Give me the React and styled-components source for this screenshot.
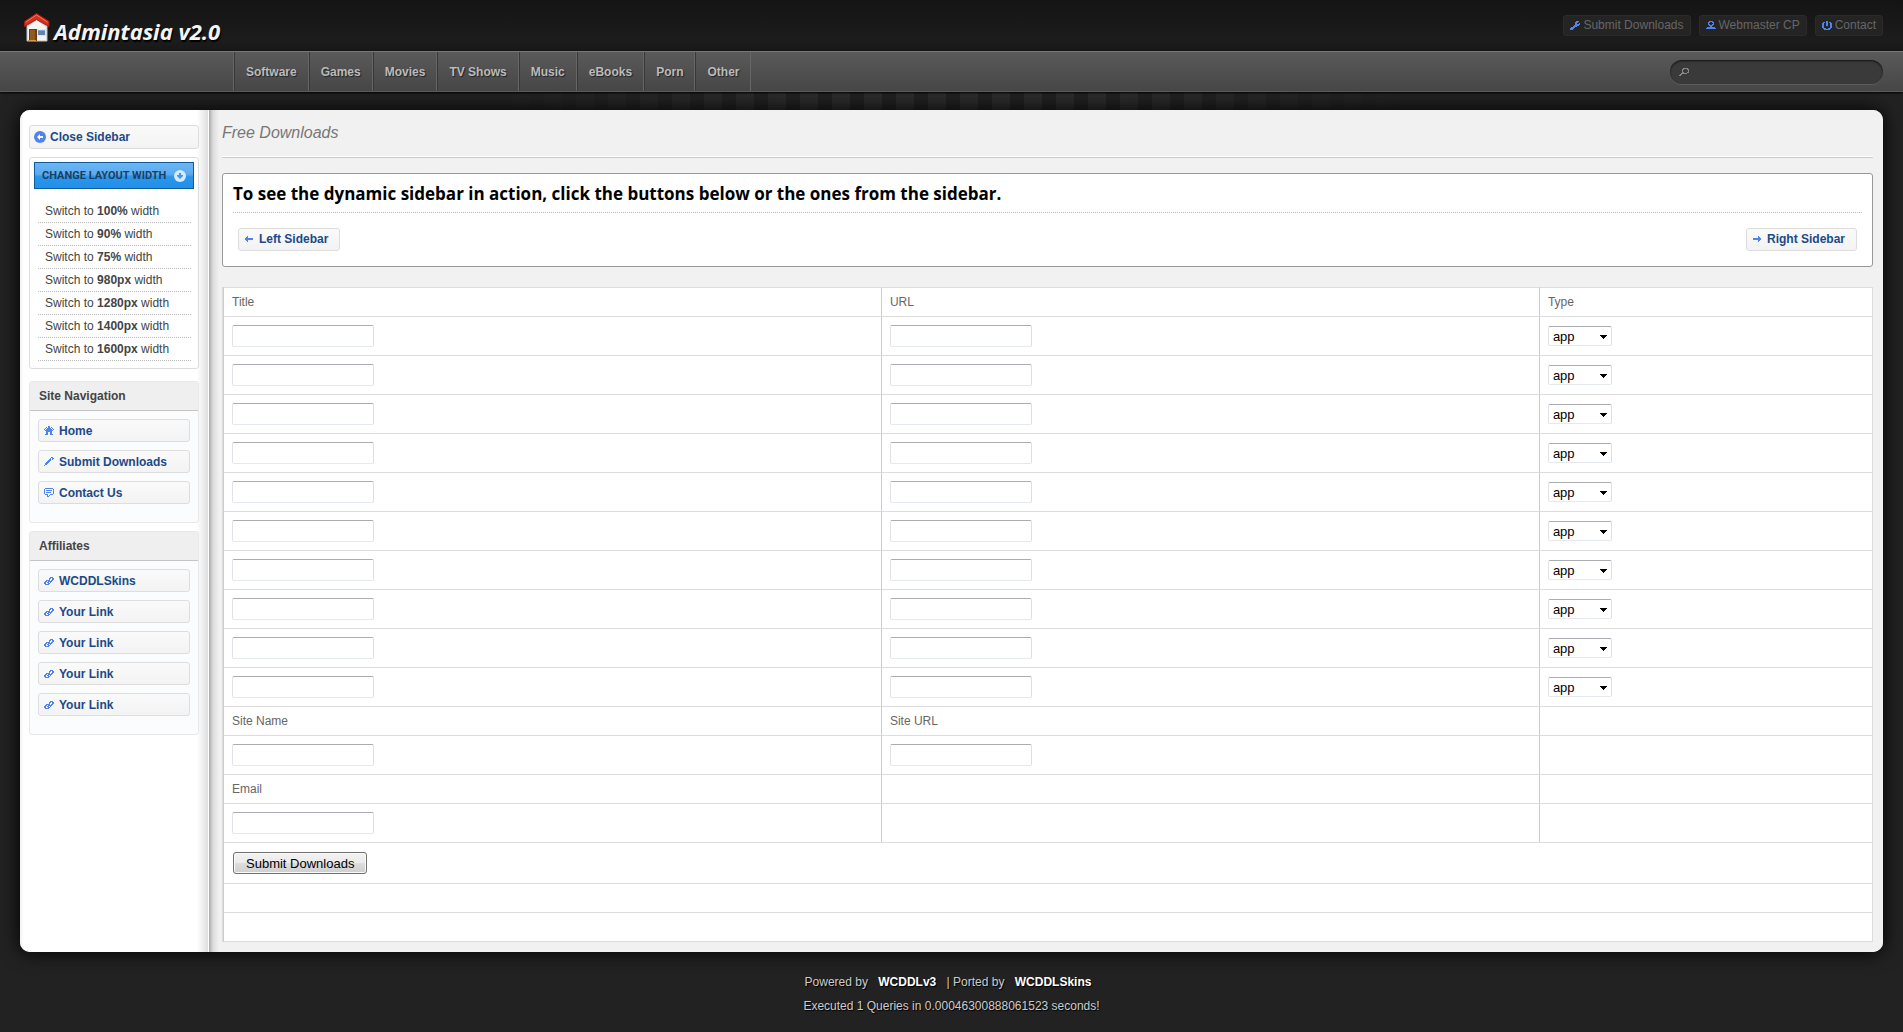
import React, { useState } from 'react';
import styled, { createGlobalStyle, css } from 'styled-components';

const categories = ['Software', 'Games', 'Movies', 'TV Shows', 'Music', 'eBooks', 'Porn', 'Other'];
const widths = ['100%', '90%', '75%', '980px', '1280px', '1400px', '1600px'];
const downloadRows = [1, 2, 3, 4, 5, 6, 7, 8, 9, 10];

// one character per pixel
const glyphs = {
  wrench: [
    '......###.',
    '.....###..',
    '.....##..#',
    '.....#####',
    '....#####.',
    '...####...',
    '.####.....',
    '####......',
    '###.......',
  ],
  person: [
    '...####...',
    '..##..##..',
    '..#....#..',
    '..##..##..',
    '...####...',
    '....##....',
    '.########.',
    '##########',
  ],
  power: [
    '....##....',
    '.##.##.##.',
    '##..##..##',
    '##..##..##',
    '##..##..##',
    '##......##',
    '##......##',
    '.###..###.',
    '..######..',
  ],
  search: [
    '....#####.',
    '...##...##',
    '...#.....#',
    '...#.....#',
    '...##...##',
    '..######..',
    '.##.......',
    '##........',
  ],
  home: [
    '....##....',
    '..#.##.#..',
    '.#.####.#.',
    '#.######.#',
    '.########.',
    '..######..',
    '..##..##..',
    '..##..##..',
    '.###..###.',
  ],
  pencil: [
    '.......##.',
    '......#.##',
    '.....##.#.',
    '....###...',
    '...###....',
    '..###.....',
    '.###......',
    '.##.......',
    '#.........',
  ],
  comment: [
    '.########.',
    '#........#',
    '#.######.#',
    '#........#',
    '#.#####..#',
    '#........#',
    '.###..###.',
    '...#.#....',
    '...##.....',
  ],
  link: [
    '......###.',
    '.....##.##',
    '.....#..##',
    '..####.##.',
    '.##.####..',
    '##.##.#...',
    '##..##....',
    '.####.....',
  ],
  left: [
    '..#.....',
    '.##.....',
    '########',
    '########',
    '.##.....',
    '..#.....',
  ],
  right: [
    '.....#..',
    '.....##.',
    '########',
    '########',
    '.....##.',
    '.....#..',
  ],
};

const Glyph = ({ name }) => {
  const rows = glyphs[name];
  return (
    <GlyphSvg
      width={rows[0].length}
      height={rows.length}
      viewBox={`0 0 ${rows[0].length} ${rows.length}`}
      shapeRendering="crispEdges"
      aria-hidden="true"
    >
      {rows.map((row, y) =>
        [...row].map((c, x) =>
          c === '#' ? <rect key={`${x}-${y}`} x={x} y={y} width="1" height="1" /> : null
        )
      )}
    </GlyphSvg>
  );
};

const HouseLogo = () => (
  <svg width="26" height="29" viewBox="0 0 26 29" aria-hidden="true">
    <path d="M3 10 L13 3 L23 10 V28 H3 Z" fill="#f4f4f4" stroke="#bdbdbd" />
    <path d="M4 14 L12.5 7 L22 14 V10 L13 4 L4 10 Z" fill="#c9c9c9" />
    <path d="M0.5 8.5 L12.5 0.5 L25 8.5 V13.5 L12.5 6.5 L0.5 13.5 Z" fill="#d9301c" stroke="#a81c0e" />
    <path d="M2 9 L12.5 2 L23.5 9" fill="none" stroke="#f0796a" />
    <rect x="5" y="16" width="8" height="12" fill="#6b3f10" />
    <rect x="6" y="17" width="5" height="10" fill="#8f5c1f" />
    <rect x="4" y="27" width="8" height="1" fill="#d89a4a" />
    <rect x="13" y="16" width="9" height="7" fill="#dfe7ef" />
    <rect x="14" y="17" width="7" height="5" fill="#5f87b3" />
    <rect x="14" y="17" width="7" height="1" fill="#87a9cc" />
  </svg>
);

const CircleArrow = ({ down }) => (
  <svg width="12" height="12" viewBox="0 0 12 12" aria-hidden="true">
    <circle cx="6" cy="6" r="6" fill={down ? '#d3eafc' : '#4f83ee'} />
    {down ? (
      <path d="M5 3 H7 V5 H9 V6 L6 9 L3 6 V5 H5 Z" fill="#3f9ae6" />
    ) : (
      <path d="M3 6 L6 3 V5 H9 V7 H6 V9 Z" fill="#fff" />
    )}
  </svg>
);

const TypeSelect = ({ row }) => (
  <SelectWrap>
    <Select defaultValue="app" aria-label={`Type ${row}`}>
      <option value="app">app</option>
      <option value="game">game</option>
      <option value="movie">movie</option>
      <option value="tv">tv</option>
      <option value="music">music</option>
    </Select>
    <SelectArrow width="7" height="4" viewBox="0 0 7 4" shapeRendering="crispEdges" aria-hidden="true">
      <path d="M0 0 H7 V1 H6 V2 H5 V3 H4 V4 H3 V3 H2 V2 H1 V1 H0 Z" />
    </SelectArrow>
  </SelectWrap>
);

const App = () => {
  const [sidebarOpen, setSidebarOpen] = useState(true);

  return (
    <>
      <GlobalStyle />
      <Header>
        <Logo href="#">
          <HouseLogo />
          <LogoText>Admintasia v2.0</LogoText>
        </Logo>
        <TopLinks>
          <TopLink href="#submit"><Glyph name="wrench" />Submit Downloads</TopLink>
          <TopLink href="#webmaster"><Glyph name="person" />Webmaster CP</TopLink>
          <TopLink href="#contact"><Glyph name="power" />Contact</TopLink>
        </TopLinks>
      </Header>
      <NavBar>
        <NavList>
          {categories.map((name) => (
            <li key={name}>
              <NavLink href={`#${name}`}>{name}</NavLink>
            </li>
          ))}
        </NavList>
        <SearchBox>
          <Glyph name="search" />
          <SearchInput type="text" aria-label="Search" />
        </SearchBox>
      </NavBar>

      <Backdrop>
        <Page>
          {sidebarOpen && (
            <Sidebar>
              <SideButton as="button" type="button" onClick={() => setSidebarOpen(false)} $close>
                <CircleArrow />
                Close Sidebar
              </SideButton>
              <LayoutBox>
                <LayoutButton type="button">
                  CHANGE LAYOUT WIDTH
                  <CircleArrow down />
                </LayoutButton>
                <WidthList>
                  {widths.map((w) => (
                    <WidthItem key={w}>
                      <a href="#width">Switch to <b>{w}</b> width</a>
                    </WidthItem>
                  ))}
                </WidthList>
              </LayoutBox>
              <Portlet>
                <PortletTitle>Site Navigation</PortletTitle>
                <PortletBody>
                  <SideButton href="#home"><Glyph name="home" />Home</SideButton>
                  <SideButton href="#submit"><Glyph name="pencil" />Submit Downloads</SideButton>
                  <SideButton href="#contact"><Glyph name="comment" />Contact Us</SideButton>
                </PortletBody>
              </Portlet>
              <Portlet>
                <PortletTitle>Affiliates</PortletTitle>
                <PortletBody>
                  <SideButton href="#skins"><Glyph name="link" />WCDDLSkins</SideButton>
                  {[1, 2, 3, 4].map((n) => (
                    <SideButton key={n} href="#link"><Glyph name="link" />Your Link</SideButton>
                  ))}
                </PortletBody>
              </Portlet>
            </Sidebar>
          )}

          <Content>
            <PageTitle>Free Downloads</PageTitle>
            <Notice>
              <NoticeTitle>
                To see the dynamic sidebar in action, click the buttons below or the ones from the sidebar.
              </NoticeTitle>
              <NoticeButtons>
                <SidebarButton type="button" onClick={() => setSidebarOpen(true)}>
                  <Glyph name="left" />Left Sidebar
                </SidebarButton>
                <SidebarButton type="button" onClick={() => setSidebarOpen(true)}>
                  <Glyph name="right" />Right Sidebar
                </SidebarButton>
              </NoticeButtons>
            </Notice>

            <form onSubmit={(e) => e.preventDefault()}>
              <Table>
                <colgroup>
                  <WideCol />
                  <WideCol />
                  <col />
                </colgroup>
                <thead>
                  <tr>
                    <Th scope="col">Title</Th>
                    <Th scope="col">URL</Th>
                    <Th scope="col">Type</Th>
                  </tr>
                </thead>
                <tbody>
                  {downloadRows.map((row) => (
                    <tr key={row}>
                      <Td><TextInput type="text" aria-label={`Title ${row}`} /></Td>
                      <Td><TextInput type="text" aria-label={`URL ${row}`} /></Td>
                      <Td><TypeSelect row={row} /></Td>
                    </tr>
                  ))}
                  <tr>
                    <Td><label htmlFor="sname">Site Name</label></Td>
                    <Td><label htmlFor="surl">Site URL</label></Td>
                    <Td />
                  </tr>
                  <tr>
                    <Td><TextInput type="text" id="sname" /></Td>
                    <Td><TextInput type="text" id="surl" /></Td>
                    <Td />
                  </tr>
                  <tr>
                    <Td><label htmlFor="email">Email</label></Td>
                    <Td />
                    <Td />
                  </tr>
                  <tr>
                    <Td><TextInput type="text" id="email" /></Td>
                    <Td />
                    <Td />
                  </tr>
                  <tr>
                    <Td colSpan="3"><SubmitButton type="submit">Submit Downloads</SubmitButton></Td>
                  </tr>
                  <tr><Td colSpan="3" /></tr>
                  <tr><Td colSpan="3" /></tr>
                </tbody>
              </Table>
            </form>
          </Content>
        </Page>

        <Footer>
          <p>
            Powered by <FooterLink href="#wcddl">WCDDLv3</FooterLink> | Ported by{' '}
            <FooterLink href="#skins">WCDDLSkins</FooterLink>
          </p>
          <p>Executed 1 Queries in 0.00046300888061523 seconds!</p>
        </Footer>
      </Backdrop>
    </>
  );
};

const GlobalStyle = createGlobalStyle`
  * {
    box-sizing: border-box;
  }
  body {
    margin: 0;
    background: #222;
    color: #666;
    font-family: 'Liberation Sans', Arial, sans-serif;
    font-size: 12px;
    line-height: 16px;
  }
  h1, h2, h3, p, ul {
    margin: 0;
    padding: 0;
  }
  ul {
    list-style: none;
  }
  a {
    color: inherit;
    text-decoration: none;
  }
  button, input, select {
    font-family: inherit;
  }
`;

const GlyphSvg = styled.svg`
  flex-shrink: 0;
  fill: #4f83ee;
`;

const Header = styled.header`
  display: flex;
  justify-content: space-between;
  align-items: flex-start;
  height: 51px;
  padding: 0 20px;
  background: linear-gradient(#141414, #1c1c1c 80%, #171717);
`;

const Logo = styled.a`
  display: flex;
  align-items: flex-start;
  gap: 4px;
  padding: 13px 4px 0;
`;

const LogoText = styled.span`
  padding-top: 4px;
  font-family: 'Open Sans', 'Noto Sans', sans-serif;
  font-size: 22px;
  font-weight: 700;
  font-style: italic;
  line-height: 28px;
  color: #f4f4f4;
  text-shadow: 1px 2px 1px #000;
`;

const TopLinks = styled.nav`
  display: flex;
  gap: 8px;
  padding-top: 15px;
`;

const TopLink = styled.a`
  display: flex;
  align-items: center;
  gap: 3px;
  height: 21px;
  padding: 0 6px 1px;
  border: 1px solid #2b2b2b;
  border-radius: 3px;
  background: #242424;
`;

const NavBar = styled.div`
  position: relative;
  display: flex;
  justify-content: space-between;
  align-items: center;
  height: 41px;
  padding: 0 20px 0 233px;
  border-top: 1px solid #777;
  border-bottom: 1px solid #5c5c5c;
  background: linear-gradient(#5a5a5a, #464646);
  box-shadow: 0 1px 2px #000;
`;

const NavList = styled.ul`
  display: flex;
  border-left: 1px solid #666;
`;

const NavLink = styled.a`
  display: block;
  padding: 2px 11px 0;
  border-left: 1px solid #383838;
  border-right: 1px solid #666;
  font-weight: 700;
  line-height: 37px;
  color: #bbb;
  text-shadow: 1px 1px 1px #222;
`;

const SearchBox = styled.div`
  display: flex;
  align-items: center;
  width: 213px;
  height: 24px;
  padding: 0 9px;
  border-radius: 12px;
  background: #3a3a3a;
  box-shadow: inset 0 1px 2px #111, 0 1px 0 #5c5c5c;

  svg {
    fill: #888;
  }
`;

const SearchInput = styled.input`
  flex: 1;
  min-width: 0;
  border: 0;
  background: none;
  color: #ccc;
  font-size: 12px;
  outline: none;
`;

const Backdrop = styled.div`
  padding: 18px 20px 10px;
  background:
    linear-gradient(to right, #222 26%, transparent 42%, transparent 58%, #222 74%) top / 100% 18px no-repeat,
    repeating-linear-gradient(to right, #2d2d2d 0 18px, #222 18px 32px) top left / 100% 18px no-repeat,
    #222;
`;

const Page = styled.div`
  display: flex;
  border-radius: 10px;
  overflow: hidden;
  background: #f1f1f1;
  box-shadow: 0 0 20px #000;
`;

const Sidebar = styled.aside`
  flex: 0 0 189px;
  display: flex;
  flex-direction: column;
  align-items: stretch;
  gap: 8px;
  min-width: 0;
  padding: 15px 9px;
  border-right: 1px solid #fff;
  background: linear-gradient(to right, #f2f2f2, #fff 4px, #fff 177px, #dedede);
`;

const buttonLook = css`
  display: flex;
  align-items: center;
  border: 1px solid #ddd;
  border-radius: 3px;
  background: linear-gradient(#fafafa, #f3f3f3);
  font-size: 12px;
  font-weight: 700;
  line-height: 16px;
  color: #1c4a87;
  cursor: pointer;
`;

const SideButton = styled.a`
  ${buttonLook}
  gap: ${(props) => (props.$close ? '4px' : '5px')};
  height: ${(props) => (props.$close ? '24px' : '23px')};
  padding: 0 ${(props) => (props.$close ? '4px' : '5px')};
`;

const LayoutBox = styled.div`
  padding: 4px 4px 7px;
  margin-bottom: 4px;
  border: 1px solid #ddd;
  border-radius: 3px;
`;

const LayoutButton = styled.button`
  display: flex;
  align-items: center;
  justify-content: space-between;
  width: 100%;
  height: 27px;
  padding: 0 7px;
  border: 1px solid #0f5c9c;
  background: linear-gradient(#6db5f2, #5aabef 45%, #2a95ea 55%, #2290ea);
  font-family: Roboto, sans-serif;
  font-size: 11px;
  font-weight: 700;
  color: #1b3f60;
  white-space: nowrap;
`;

const WidthList = styled.ul`
  padding: 11px 3px 0 4px;
`;

const WidthItem = styled.li`
  padding: 3px 7px;
  border-bottom: 1px dotted #bbb;
  color: #444;
`;

const Portlet = styled.section`
  border: 1px solid #e8e8e8;
  border-radius: 3px;
  background: #fbfcfd;
`;

const PortletTitle = styled.h3`
  padding: 6px 9px;
  border-bottom: 1px solid #c4c4c4;
  background: #efefef;
  font-size: 12px;
  line-height: 16px;
  color: #444;
`;

const PortletBody = styled.div`
  display: flex;
  flex-direction: column;
  gap: 8px;
  padding: 8px 8px 18px;
`;

const Content = styled.main`
  flex: 1;
  min-width: 0;
  padding: 0 10px 10px 13px;
  background: linear-gradient(to right, #a9a9a9, #dcdcdc 4px, #f1f1f1 10px);
`;

const PageTitle = styled.h1`
  margin-bottom: 15px;
  padding: 13px 0 14px;
  border-bottom: 1px solid #ccc;
  box-shadow: inset 0 -1px #fff;
  font-size: 16px;
  font-weight: 400;
  font-style: italic;
  line-height: 20px;
  color: #777;
`;

const Notice = styled.section`
  margin-bottom: 20px;
  padding: 0 10px;
  border: 1px solid #999;
  border-radius: 3px;
  background: #fff;
`;

const NoticeTitle = styled.h2`
  padding-top: 2px;
  border-bottom: 1px dotted #bbb;
  font-family: 'Open Sans', 'Noto Sans', sans-serif;
  font-size: 17px;
  line-height: 36px;
  color: #000;
`;

const NoticeButtons = styled.div`
  display: flex;
  justify-content: space-between;
  padding: 15px 5px;
`;

const SidebarButton = styled.button`
  ${buttonLook}
  gap: 6px;
  height: 23px;
  padding: 0 11px 2px 6px;
`;

const Table = styled.table`
  width: 100%;
  table-layout: fixed;
  border-spacing: 0;
  border: 1px solid #ddd;
  border-top: 0;
  border-bottom: 0;
  background: #fff;

  tbody tr:last-child td {
    height: 30px;
    border-bottom: 1px solid #ddd;
  }
`;

const WideCol = styled.col`
  width: 39.9%;
`;

const cell = css`
  height: 29px;
  padding: 0 8px;
  border-top: 1px solid #ddd;
  border-left: 1px solid #ccc;
  text-align: left;
  vertical-align: middle;
  font-weight: 400;
`;

const Th = styled.th`
  ${cell}
`;

const Td = styled.td`
  ${cell}

  &:has(input),
  &:has(select) {
    height: 39px;
  }
  &:has(button) {
    height: 41px;
    padding-left: 9px;
  }
`;

const fieldBorder = css`
  border: 1px solid;
  border-color: #abadb3 #dbdfe6 #e3e9ef #e2e3ea;
  border-radius: 2px;
  background: #fff;
  color: #000;
  font-size: 13px;
`;

const TextInput = styled.input`
  ${fieldBorder}
  display: block;
  width: 142px;
  height: 22px;
  padding: 1px 4px;
`;

const SelectWrap = styled.span`
  position: relative;
  display: block;
  width: 64px;
`;

const Select = styled.select`
  ${fieldBorder}
  display: block;
  appearance: none;
  width: 100%;
  height: 20px;
  padding: 0 4px;
`;

const SelectArrow = styled.svg`
  position: absolute;
  top: 9px;
  right: 5px;
  pointer-events: none;
`;

const SubmitButton = styled.button`
  display: block;
  height: 22px;
  padding: 0 12px;
  border: 1px solid #707070;
  border-radius: 3px;
  background: linear-gradient(#f2f2f2, #ebebeb 50%, #dddddd 50%, #cfcfcf);
  box-shadow: inset 0 0 0 1px #fafafa;
  font-size: 13px;
  color: #000;
`;

const Footer = styled.footer`
  padding-top: 18px;
  text-align: center;
  line-height: 24px;
  color: #ccc;
  text-shadow: 1px 1px 1px #000;
`;

const FooterLink = styled.a`
  padding: 0 7px;
  font-weight: 700;
  color: #fff;
`;

export default App;
